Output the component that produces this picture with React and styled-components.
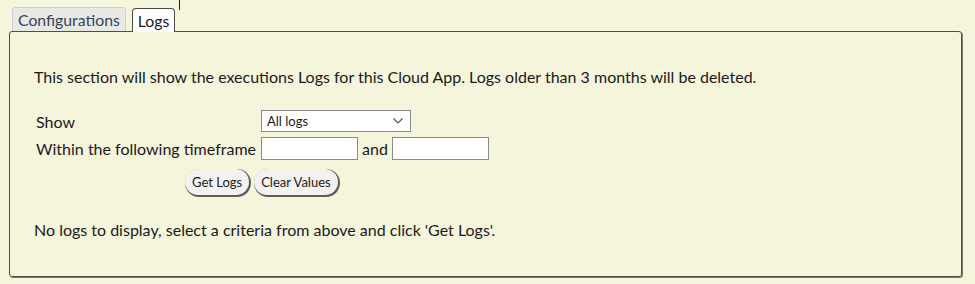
import React from "react";
import styled, { createGlobalStyle } from "styled-components";

const Global = createGlobalStyle`
  html, body {
    margin: 0;
    background: #f5f5dc;
  }
  body {
    font-family: Lato, "Open Sans", sans-serif;
    color: #1a1a1a;
  }
`

const Page = styled.div`
  width: 975px;
  height: 284px;
  padding: 0 0 0 9px;
  box-sizing: border-box;
`

const TabBar = styled.div`
  display: flex;
  align-items: flex-end;
  height: 31px;
  padding-left: 3px;
  gap: 6px;
`

const Tab = styled.div`
  height: 23px;
  padding: 0 5px;
  display: flex;
  align-items: center;
  font-size: 15.8px;
  border: 1px solid ${p => (p.$active ? "#4a4a4a" : "#cfcfcf")};
  border-bottom: none;
  border-radius: 4px 4px 0 0;
  background: ${p => (p.$active ? "#ffffff" : "#e8e8e4")};
  color: ${p => (p.$active ? "#1a1a1a" : "#33465a")};
  margin-bottom: ${p => (p.$active ? "-1px" : "0")};
  position: relative;
  z-index: 1;
`

const Caret = styled.span`
  align-self: flex-start;
  width: 1px;
  height: 10px;
  background: #222;
  margin-left: -2px;
`

const Panel = styled.div`
  width: 953px;
  height: 246px;
  box-sizing: border-box;
  border: 1px solid #4f4f45;
  border-radius: 3px;
  box-shadow: 1px 1px 0 #7a7a6e;
  padding: 35px 24px 0 24px;
`

const Intro = styled.p`
  margin: 0;
  font-size: 16px;
  line-height: 19px;
`

const Form = styled.div`
  margin-top: 24px;
  margin-left: 2px;
  display: grid;
  grid-template-columns: 225px auto;
  row-gap: 5px;
  align-items: center;
  font-size: 16px;
`

const Label = styled.span`
  line-height: 19px;
`

const Field = styled.div`
  display: flex;
  align-items: center;
  gap: 4px;
`

const SelectBox = styled.div`
  position: relative;
  width: 150px;
  height: 22px;
  box-sizing: border-box;
  border: 1px solid #8a8a8a;
  background: #fff;
  font-size: 13px;
  display: flex;
  align-items: center;
  padding-left: 5px;
`

const Chevron = styled.svg`
  position: absolute;
  right: 7px;
  top: 7px;
`

const Input = styled.input`
  width: 97px;
  height: 23px;
  box-sizing: border-box;
  border: 1px solid #8a8a8a;
  background: #fff;
  margin: 0;
  padding: 0 3px;
  font-family: inherit;
`

const Buttons = styled.div`
  display: flex;
  gap: 5px;
  margin: 9px 0 0 151px;
`

const Button = styled.button`
  height: 26px;
  padding: 0 7px;
  border: none;
  border-radius: 13px;
  background: #f2f2ef;
  box-shadow: 1px 1px 0 1px #5c5c5c;
  font-family: inherit;
  font-size: 13px;
  color: #1a1a1a;
`

const Empty = styled.p`
  margin: 25px 0 0;
  font-size: 16px;
  line-height: 19px;
`

export default function App() {
  return (
    <Page>
      <Global />
      <TabBar>
        <Tab>Configurations</Tab>
        <Tab $active>Logs</Tab>
        <Caret />
      </TabBar>
      <Panel>
        <Intro>
          This section will show the executions Logs for this Cloud App. Logs older than 3 months will be deleted.
        </Intro>
        <Form>
          <Label>Show</Label>
          <Field>
            <SelectBox>
              All logs
              <Chevron width="10" height="6" viewBox="0 0 10 6">
                <path d="M0.5 0.5 L5 5 L9.5 0.5" fill="none" stroke="#555" strokeWidth="1.2" />
              </Chevron>
            </SelectBox>
          </Field>
          <Label>Within the following timeframe</Label>
          <Field>
            <Input />
            <Label>and</Label>
            <Input />
          </Field>
        </Form>
        <Buttons>
          <Button>Get Logs</Button>
          <Button>Clear Values</Button>
        </Buttons>
        <Empty>No logs to display, select a criteria from above and click 'Get Logs'.</Empty>
      </Panel>
    </Page>
  );
}
